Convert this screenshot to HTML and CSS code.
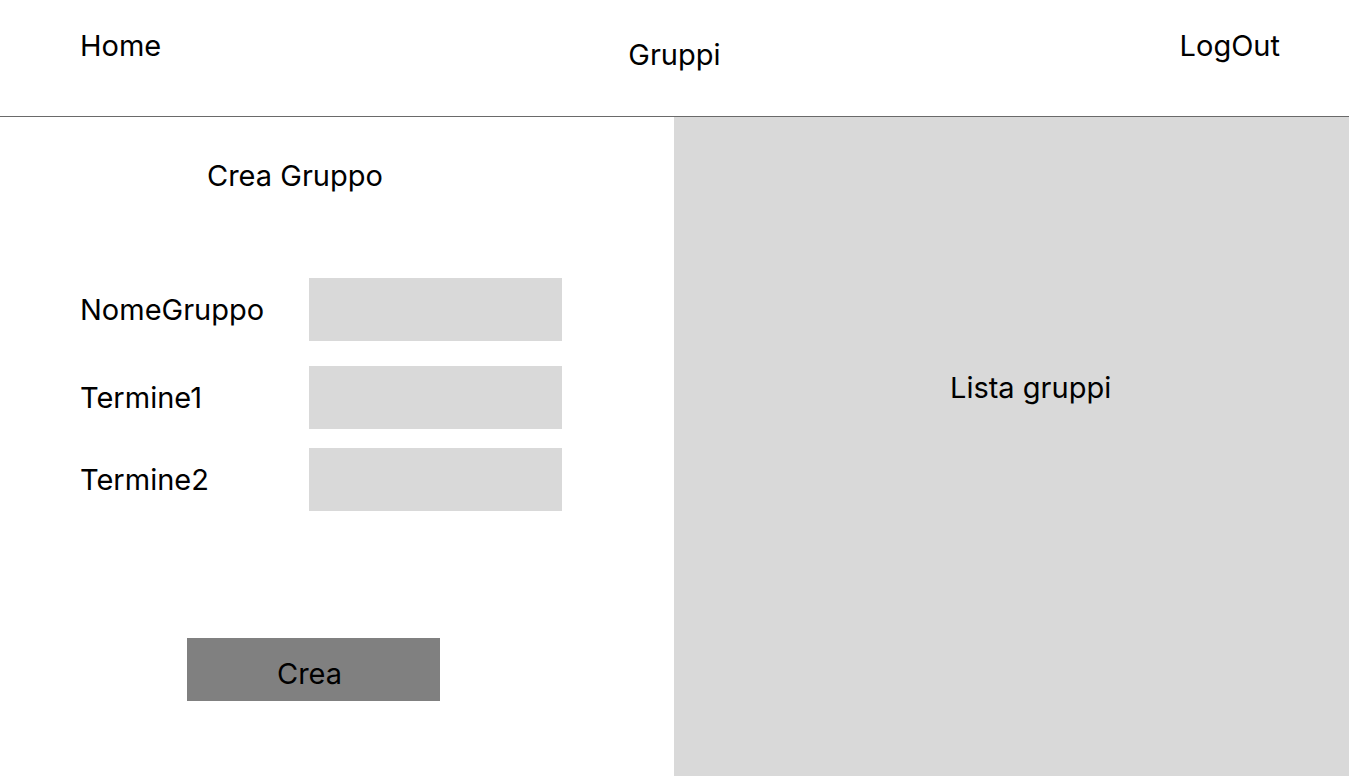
FILE: index.html
```html
<!DOCTYPE html>
<html lang="it">
<head>
<meta charset="utf-8">
<title>Gruppi</title>
<link rel="stylesheet" href="styles.css">
</head>
<body>
<header class="topbar">
  <a class="nav-link nav-home">Home</a>
  <div class="nav-title">Gruppi</div>
  <a class="nav-link nav-logout">LogOut</a>
</header>
<main class="content">
  <section class="create-panel">
    <h2 class="panel-title">Crea Gruppo</h2>
    <div class="form">
      <div class="form-row">
        <label class="form-label">NomeGruppo</label>
        <div class="form-input"></div>
      </div>
      <div class="form-row row-t1">
        <label class="form-label">Termine1</label>
        <div class="form-input"></div>
      </div>
      <div class="form-row row-t2">
        <label class="form-label">Termine2</label>
        <div class="form-input"></div>
      </div>
    </div>
    <button class="create-btn">Crea</button>
  </section>
  <section class="list-panel">
    <div class="list-title">Lista gruppi</div>
  </section>
</main>
</body>
</html>
```
FILE: styles.css
```css
* { box-sizing: border-box; }
html, body { margin: 0; padding: 0; }
body {
  width: 1349px;
  height: 776px;
  overflow: hidden;
  background: #ffffff;
  font-family: Inter, "Noto Sans", sans-serif;
  font-size: 29px;
  line-height: 35px;
  color: #000000;
  display: flex;
  flex-direction: column;
}
.topbar {
  height: 117px;
  flex: none;
  border-bottom: 1px solid #6a6a6a;
  display: flex;
  justify-content: space-between;
  align-items: flex-start;
  padding: 28px 69px 0 80px;
}
.nav-link { color: #000; text-decoration: none; }
.nav-title { margin: 9px 0 0 8px; }
.content {
  flex: 1;
  display: flex;
}
.create-panel {
  width: 674px;
  flex: none;
  display: flex;
  flex-direction: column;
  align-items: flex-start;
}
.panel-title {
  margin: 41px 0 0 207px;
  font-size: 29px;
  font-weight: 400;
  line-height: 35px;
}
.form {
  margin-top: 85px;
  padding-left: 80px;
  display: flex;
  flex-direction: column;
}
.form-row {
  display: flex;
  align-items: center;
}
.row-t1 { margin-top: 25px; }
.row-t2 { margin-top: 19px; }
.form-label {
  width: 229px;
}
.form-input {
  width: 253px;
  height: 63px;
  background: #d9d9d9;
}
.create-btn {
  margin: 127px 0 0 187px;
  width: 253px;
  height: 63px;
  border: none;
  background: #808080;
  font: inherit;
  color: #000;
  text-align: left;
  display: flex;
  align-items: flex-start;
  padding: 18px 0 0 90px;
}
.list-panel {
  flex: 1;
  background: #d9d9d9;
  padding: 253px 0 0 276px;
}
```
